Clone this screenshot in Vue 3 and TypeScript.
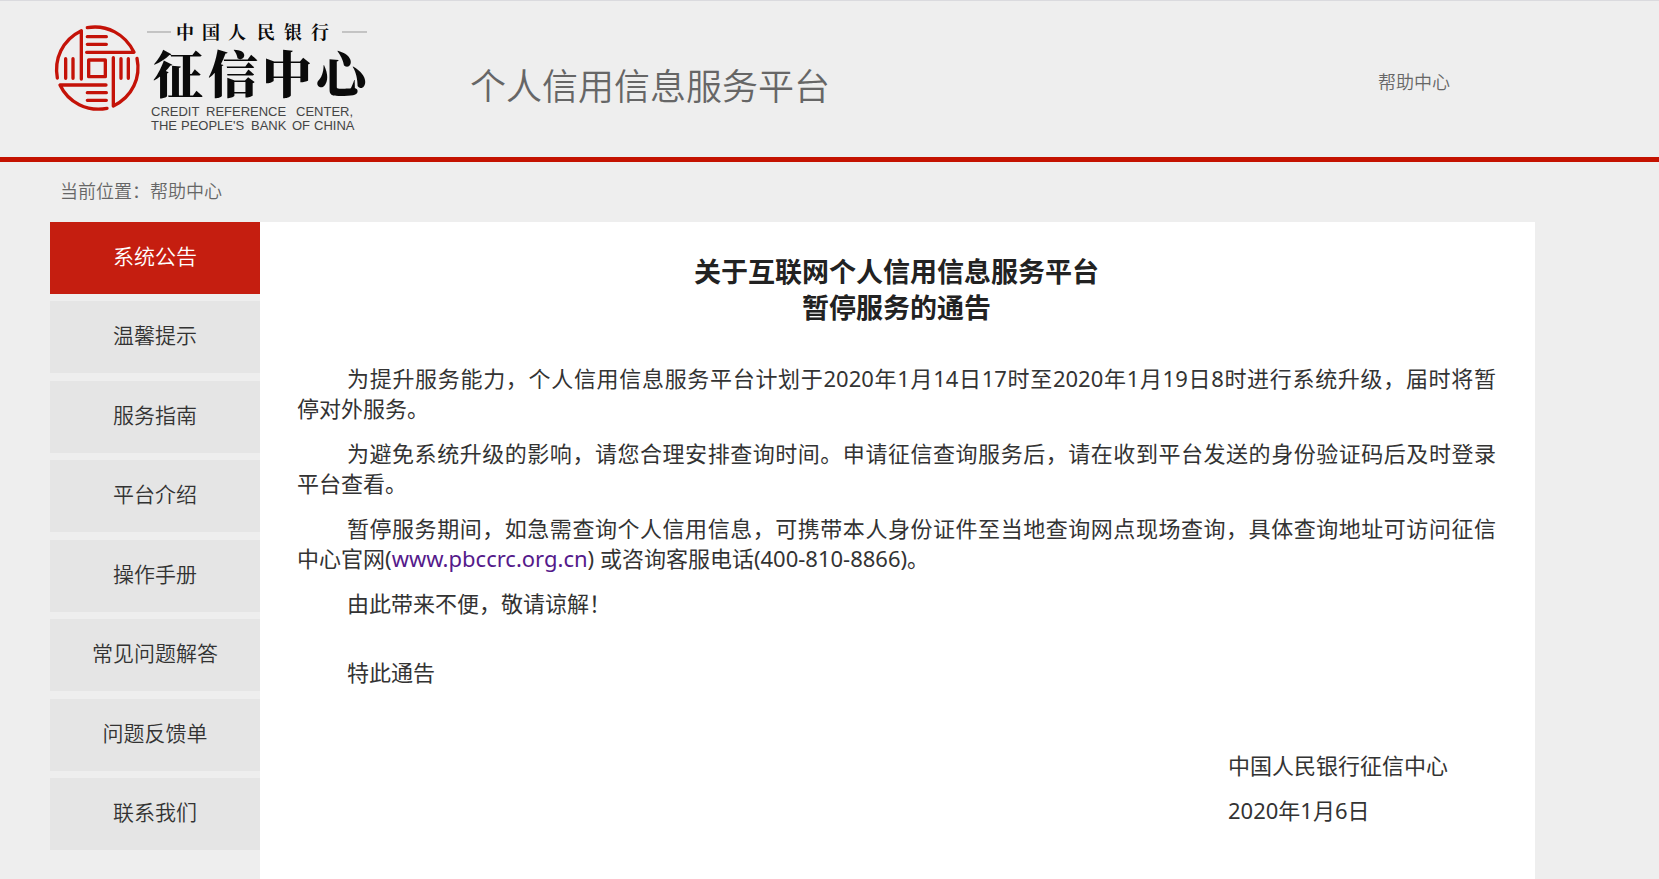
<script setup lang="ts">
import { ref } from 'vue'

const menu: string[] = [
  '系统公告',
  '温馨提示',
  '服务指南',
  '平台介绍',
  '操作手册',
  '常见问题解答',
  '问题反馈单',
  '联系我们',
]
const active = ref<string>('系统公告')
</script>

<template>
  <div class="page">
    <header class="header">
      <a class="brand" href="#" aria-label="中国人民银行征信中心">
        <svg class="logo" viewBox="0 0 320 120" width="320" height="120">
          <g class="emblem" transform="translate(0 1) scale(0.3333)">
            <path d="M22 174C12 118 36 60 94 32V177" />
            <path d="M112 23C170 13 226 42 252 97H110" />
            <path d="M261 115C273 172 248 230 190 258V113" />
            <path d="M171 265C112 276 55 248 30 195H168" />
            <path d="M112 50H169M112 73H169M112 218H169M112 241H169" />
            <path d="M47 116V175M69 116V175M213 116V175M235 116V175" />
            <rect x="116" y="120" width="50" height="50" />
          </g>
          <path class="rule" d="M97 13H121M292 13H317" />
          <text class="bank" x="126 152 178 207 234 261" y="20">中国人民银行</text>
          <text class="center" x="103 158 212 266" y="74">征信中心</text>
          <text class="latin" y="97">
            <tspan x="101">CREDIT</tspan><tspan x="156">REFERENCE</tspan><tspan x="246">CENTER,</tspan>
          </text>
          <text class="latin" y="111">
            <tspan x="101">THE</tspan><tspan x="131">PEOPLE'S</tspan><tspan x="201">BANK</tspan><tspan x="242">OF</tspan><tspan x="264">CHINA</tspan>
          </text>
        </svg>
      </a>
      <h1 class="platform">个人信用信息服务平台</h1>
      <a class="help" href="#">帮助中心</a>
    </header>

    <div class="crumbs">当前位置：帮助中心</div>

    <div class="body">
      <nav class="menu">
        <button
          v-for="item in menu"
          :key="item"
          type="button"
          class="item"
          :class="{ active: item === active }"
          @click="active = item"
        >
          {{ item }}
        </button>
      </nav>

      <main class="notice">
        <h2 class="title">关于互联网个人信用信息服务平台<br />暂停服务的通告</h2>
        <p>为提升服务能力，个人信用信息服务平台计划于2020年1月14日17时至2020年1月19日8时进行系统升级，届时将暂<span class="phrase">停对外服务。</span></p>
        <p>为避免系统升级的影响，请您合理安排查询时间。申请征信查询服务后，请在收到平台发送的身份验证码后及时登录<span class="phrase">平台查看。</span></p>
        <p>暂停服务期间，如急需查询个人信用信息，可携带本人身份证件至当地查询网点现场查询，具体查询地址可访问征信<span class="phrase">中心官网</span>(<a class="site" href="#">www.pbccrc.org.cn</a>) 或咨询客服电话(400-810-8866)。</p>
        <p>由此带来不便，敬请谅解！</p>
        <p class="closing">特此通告</p>
        <div class="signature">
          <p>中国人民银行征信中心</p>
          <p>2020年1月6日</p>
        </div>
      </main>
    </div>
  </div>
</template>

<style>
body {
  margin: 0;
  background: #eeeeee;
}
</style>

<style scoped>
.page {
  display: flex;
  flex-direction: column;
  box-sizing: border-box;
  min-height: 100vh;
  border-top: 1px solid #dadade;
  background: #eeeeee;
  color: #333333;
  font-family: "Noto Sans", "Noto Sans CJK SC", sans-serif;
  font-weight: 350;
}

.header {
  display: flex;
  align-items: center;
  box-sizing: border-box;
  min-height: 161px;
  padding: 0 209px 0 50px;
  border-bottom: 5px solid #c41200;
}

.brand {
  flex: none;
  display: block;
}

.logo {
  display: block;
}

.emblem {
  fill: none;
  stroke: #c41208;
  stroke-width: 10;
  stroke-linecap: round;
  stroke-linejoin: round;
}

.rule {
  stroke: #999999;
  stroke-width: 1;
}

.bank {
  font-size: 18px;
  font-weight: 700;
}

.center {
  font-size: 50px;
  font-weight: 900;
}

.bank,
.center {
  fill: #0a0a0a;
  font-family: "Noto Serif CJK SC", "Noto Sans CJK SC", serif;
}

.latin {
  fill: #444444;
  font: 400 13px "Liberation Sans", sans-serif;
}

.platform {
  margin: 16px 0 0 100px;
  color: #666666;
  font-size: 36px;
  font-weight: 350;
  line-height: 48px;
}

.help {
  margin: 6px 0 0 auto;
  color: #666666;
  font-size: 18px;
  line-height: 24px;
  text-decoration: none;
}

.crumbs {
  padding: 17px 60px 19px;
  color: #666666;
  font-size: 18px;
  line-height: 24px;
}

.body {
  flex: 1;
  display: flex;
  margin: 0 124px 0 50px;
}

.menu {
  flex: none;
  align-self: flex-start;
  display: flex;
  flex-direction: column;
  justify-content: space-between;
  width: 210px;
  min-height: 628px;
}

.item {
  height: 72px;
  padding: 0 0 6px;
  border: 0;
  background: #e5e5e5;
  color: #333333;
  font: inherit;
  font-size: 21px;
  cursor: pointer;
}

.active {
  background: #c51e10;
  color: #ffffff;
}

.notice {
  flex: 1;
  padding: 32px 39px 0 37px;
  background: #ffffff;
  font-size: 22px;
  font-weight: 400;
  line-height: 30px;
}

.title {
  margin: 0 0 37px;
  color: #222222;
  font-size: 27px;
  font-weight: 700;
  line-height: 36px;
  text-align: center;
}

.notice p {
  margin: 0 0 15px;
  text-align: justify;
  text-indent: 50px;
}

.phrase {
  white-space: nowrap;
}

.site {
  color: #551a8b;
  text-decoration: none;
}

.notice .closing {
  margin-top: 39px;
}

.signature {
  width: 268px;
  margin: 63px 0 0 auto;
}

.notice .signature p {
  text-indent: 0;
}
</style>
